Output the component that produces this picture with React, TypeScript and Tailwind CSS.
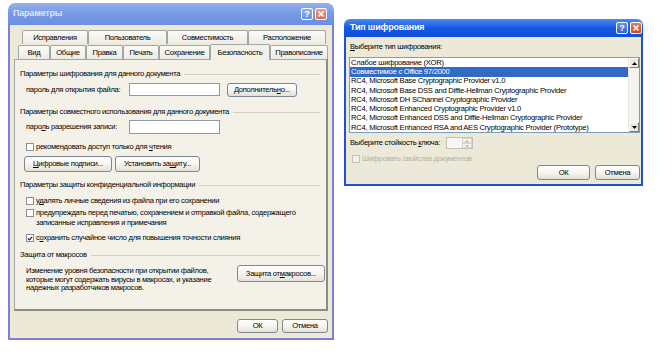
import * as React from "react";

const XpButton = ({ children, className = "" }: { children: React.ReactNode; className?: string }) => (
  <div
    className={
      "flex items-center justify-center whitespace-nowrap rounded-[3px] border border-[#7d8796] bg-gradient-to-b from-white via-[#f6f5f0] to-[#e3e1d6] text-black leading-none " +
      className
    }
  >
    {children}
  </div>
);

const Check = ({ checked = false, disabled = false }: { checked?: boolean; disabled?: boolean }) => (
  <div
    className={
      "w-[8px] h-[8px] shrink-0 border flex items-center justify-center " +
      (disabled ? "border-[#c6c4b7] bg-[#f1efe6]" : "border-[#8a909a] bg-white")
    }
  >
    {checked && (
      <svg width="7" height="7" viewBox="0 0 7 7">
        <path d="M1 3.3 L2.8 5.2 L6 1.6" fill="none" stroke="#1c1c1c" strokeWidth="1.4" />
      </svg>
    )}
  </div>
);

const GroupHeader = ({ title }: { title: string }) => (
  <div className="flex items-center h-[10px] pl-[5px] pr-[6px]">
    <span className="whitespace-nowrap">{title}</span>
    <div className="flex-1 ml-[4px] border-t border-[#d3d0c0]" />
  </div>
);

const TitleButtons = ({ active }: { active: boolean }) => (
  <div className="flex gap-[2px]">
    <div
      className={
        "w-[12px] h-[12px] rounded-[2px] border border-white flex items-center justify-center text-white font-bold text-[9px] leading-none " +
        (active ? "bg-gradient-to-b from-[#5d94f7] to-[#2a64e2]" : "bg-gradient-to-b from-[#8fb1f2] to-[#6990e6]")
      }
    >
      ?
    </div>
    <div
      className={
        "w-[12px] h-[12px] rounded-[2px] border border-white flex items-center justify-center " +
        (active ? "bg-gradient-to-b from-[#ec7a56] to-[#cf4320]" : "bg-gradient-to-b from-[#ee9a86] to-[#dc6d58]")
      }
    >
      <svg width="8" height="8" viewBox="0 0 8 8">
        <path d="M1.5 1.5 L6.5 6.5 M6.5 1.5 L1.5 6.5" stroke="white" strokeWidth="1.6" />
      </svg>
    </div>
  </div>
);

const Tab = ({ label, w, selected = false }: { label: string; w: number; selected?: boolean }) => (
  <div
    style={{ width: w }}
    className={
      "flex items-center justify-center border-t border-l border-r border-[#a1a6a6] rounded-t-[2px] whitespace-nowrap " +
      (selected
        ? "h-[16px] -mt-[2px] bg-[#f4f2e8] border-b-0 relative z-10 -mb-[1px]"
        : "h-[14px] bg-gradient-to-b from-[#fbfaf6] to-[#ecebe3]")
    }
  >
    {label}
  </div>
);

const ParamsDialog = () => {
  const row1 = [
    { l: "Исправления", w: 66 },
    { l: "Пользователь", w: 79 },
    { l: "Совместимость", w: 81 },
    { l: "Расположение", w: 78 },
  ];
  const row2 = [
    { l: "Вид", w: 32 },
    { l: "Общие", w: 36 },
    { l: "Правка", w: 37 },
    { l: "Печать", w: 36 },
    { l: "Сохранение", w: 51 },
    { l: "Безопасность", w: 60, s: true },
    { l: "Правописание", w: 58 },
  ];
  return (
    <div className="ml-[8px] mt-[3px] w-[326px] h-[337px] flex flex-col shrink-0">
      <div className="h-[22px] rounded-t-[7px] bg-gradient-to-b from-[#93b1ee] via-[#7799e6] to-[#6a8fe2] flex items-center justify-between pl-[5px] pr-[7px]">
        <span className="text-[9px] font-bold text-[#dce6f8] tracking-[-0.2px]">Параметры</span>
        <TitleButtons active={false} />
      </div>
      <div className="flex-1 border-x-2 border-b-2 border-[#7c80d9] bg-[#ece9d8] flex flex-col text-[7.6px] tracking-[-0.3px] text-black leading-none">
        <div className="mt-[5px] ml-[12px] flex">
          {row1.map((t) => (
            <Tab key={t.l} label={t.l} w={t.w} />
          ))}
        </div>
        <div className="ml-[8px] flex items-end h-[15px]">
          {row2.map((t) => (
            <Tab key={t.l} label={t.l} w={t.w} selected={t.s} />
          ))}
        </div>
        <div className="ml-[4px] w-[314px] h-[252px] border-t border-l border-[#a1a6a6] border-r-2 border-b-2 border-r-[#8e8c7c] border-b-[#8e8c7c] bg-[#f4f2e8] flex flex-col">
          <div className="mt-[9px]">
            <GroupHeader title="Параметры шифрования для данного документа" />
          </div>
          <div className="mt-[4px] h-[14px] flex items-start pl-[11px]">
            <span className="w-[103px] pt-[3px] whitespace-nowrap">пароль для открытия файла:</span>
            <div className="w-[91px] h-[13px] bg-white border border-[#8c9aa8]" />
            <XpButton className="ml-[7px] w-[70px] h-[14px]">
              Дополнитель<u>н</u>о...
            </XpButton>
          </div>
          <div className="mt-[10px]">
            <GroupHeader title="Параметры совместного использования для данного документа" />
          </div>
          <div className="mt-[2px] h-[15px] flex items-center pl-[11px]">
            <span className="w-[103px] whitespace-nowrap">
              паро<u>л</u>ь разрешения записи:
            </span>
            <div className="w-[91px] h-[14px] bg-white border border-[#8c9aa8]" />
          </div>
          <div className="mt-[8px] h-[10px] flex items-center pl-[11px] gap-[2px]">
            <Check />
            <span className="whitespace-nowrap">
              рекомендовать доступ только для <u>ч</u>тения
            </span>
          </div>
          <div className="mt-[4px] h-[16px] flex pl-[9px] gap-[3px]">
            <XpButton className="w-[88px] h-[16px]">
              <u>Ц</u>ифровые подписи...
            </XpButton>
            <XpButton className="w-[85px] h-[16px]">
              Установить за<u>щ</u>иту...
            </XpButton>
          </div>
          <div className="mt-[8px]">
            <GroupHeader title="Параметры защиты конфиденциальной информации" />
          </div>
          <div className="mt-[6px] h-[10px] flex items-center pl-[11px] gap-[2px]">
            <Check />
            <span className="whitespace-nowrap">
              у<u>д</u>алять личные сведения из файла при его сохранении
            </span>
          </div>
          <div className="mt-[2px] h-[20px] flex items-start pl-[11px] gap-[2px]">
            <div className="h-[10px] flex items-center">
              <Check />
            </div>
            <div className="flex flex-col whitespace-nowrap">
              <span className="h-[10px] flex items-center">
                предупреждать перед печатью, сохранением и отправкой файла, содержащего
              </span>
              <span className="h-[10px] flex items-center">записанные исправления и примечания</span>
            </div>
          </div>
          <div className="mt-[5px] h-[10px] flex items-center pl-[11px] gap-[2px]">
            <Check checked />
            <span className="whitespace-nowrap">
              с<u>о</u>хранить случайное число для повышения точности слияния
            </span>
          </div>
          <div className="mt-[7px]">
            <GroupHeader title="Защита от макросов" />
          </div>
          <div className="mt-[5px] flex pl-[11px]">
            <div className="w-[211px] flex flex-col pt-[2px] whitespace-nowrap">
              <span className="h-[8.5px] flex items-center">Изменение уровня безопасности при открытии файлов,</span>
              <span className="h-[8.5px] flex items-center">которые могут содержать вирусы в макросах, и указание</span>
              <span className="h-[8.5px] flex items-center">надежных разработчиков макросов.</span>
            </div>
            <XpButton className="w-[88px] h-[17px]">
              Защита от <u>м</u>акросов...
            </XpButton>
          </div>
        </div>
        <div className="mt-[8px] flex justify-end gap-[4px] pr-[4px]">
          <XpButton className="w-[41px] h-[14px]">ОК</XpButton>
          <XpButton className="w-[46px] h-[14px]">Отмена</XpButton>
        </div>
      </div>
    </div>
  );
};

const EncryptionDialog = () => {
  const items = [
    "Слабое шифрование (XOR)",
    "Совместимое с Office 97/2000",
    "RC4, Microsoft Base Cryptographic Provider v1.0",
    "RC4, Microsoft Base DSS and Diffie-Hellman Cryptographic Provider",
    "RC4, Microsoft DH SChannel Cryptographic Provider",
    "RC4, Microsoft Enhanced Cryptographic Provider v1.0",
    "RC4, Microsoft Enhanced DSS and Diffie-Hellman Cryptographic Provider",
    "RC4, Microsoft Enhanced RSA and AES Cryptographic Provider (Prototype)",
  ];
  return (
    <div className="ml-[10px] mt-[19px] w-[299px] h-[167px] flex flex-col shrink-0">
      <div className="h-[18px] rounded-t-[6px] bg-gradient-to-b from-[#4a8af6] via-[#1658e3] to-[#0d4fd9] flex items-center justify-between pl-[6px] pr-[1px]">
        <span className="text-[9px] font-bold text-white tracking-[-0.2px]">Тип шифрования</span>
        <TitleButtons active />
      </div>
      <div className="flex-1 border-x-2 border-b-2 border-[#1e4fd6] bg-[#ece9d8] flex flex-col text-[7.6px] tracking-[-0.3px] text-black leading-none">
        <div className="mt-[5px] h-[10px] flex items-center pl-[4px]">
          <span className="whitespace-nowrap">
            <u>В</u>ыберите тип шифрования:
          </span>
        </div>
        <div className="mt-[5px] ml-[3px] w-[291px] h-[76px] border border-[#7f9db9] bg-white flex">
          <div className="flex-1 flex flex-col tracking-[-0.25px]">
            {items.map((it, i) => (
              <div
                key={it}
                className={
                  "h-[9.25px] flex items-center pl-[1px] whitespace-nowrap " +
                  (i === 1 ? "bg-[#316ac5] text-white" : "")
                }
              >
                {it}
              </div>
            ))}
          </div>
          <div className="w-[11px] bg-[#f4f3ee] flex flex-col justify-between border-l border-[#e8e6dc]">
            <div className="h-[10px] bg-[#ece9d8] border border-t-white border-l-white border-r-[#808080] border-b-[#808080] flex items-center justify-center">
              <svg width="5" height="3" viewBox="0 0 5 3">
                <path d="M0 3 L2.5 0 L5 3 Z" fill="black" />
              </svg>
            </div>
            <div className="h-[10px] bg-[#ece9d8] border border-t-white border-l-white border-r-[#808080] border-b-[#808080] flex items-center justify-center">
              <svg width="5" height="3" viewBox="0 0 5 3">
                <path d="M0 0 L2.5 3 L5 0 Z" fill="black" />
              </svg>
            </div>
          </div>
        </div>
        <div className="mt-[4px] h-[12px] flex items-center pl-[4px]">
          <span className="w-[96px] whitespace-nowrap">
            Выберите стойкость <u>к</u>люча:
          </span>
          <div className="w-[27px] h-[12px] border border-[#c3c1b3] bg-[#f7f6f0] flex justify-end">
            <div className="w-[10px] flex flex-col">
              <div className="flex-1 border border-[#d8d6cb] flex items-center justify-center">
                <svg width="4" height="2" viewBox="0 0 4 2">
                  <path d="M0 2 L2 0 L4 2 Z" fill="#b8b6aa" />
                </svg>
              </div>
              <div className="flex-1 border border-[#d8d6cb] flex items-center justify-center">
                <svg width="4" height="2" viewBox="0 0 4 2">
                  <path d="M0 0 L2 2 L4 0 Z" fill="#b8b6aa" />
                </svg>
              </div>
            </div>
          </div>
        </div>
        <div className="mt-[5px] h-[10px] flex items-center pl-[6px] gap-[2px] text-[#b3b1a4]">
          <Check disabled />
          <span className="whitespace-nowrap">Шифровать свойства документов</span>
        </div>
        <div className="mt-[1px] flex justify-end gap-[5px] pr-[1px]">
          <XpButton className="w-[53px] h-[15px]">ОК</XpButton>
          <XpButton className="w-[45px] h-[15px]">Отмена</XpButton>
        </div>
      </div>
    </div>
  );
}

export default function App() {
  return (
    <div className="w-[672px] h-[353px] bg-white overflow-hidden flex items-start font-['Liberation_Sans',sans-serif]">
      <ParamsDialog />
      <EncryptionDialog />
    </div>
  );
}
